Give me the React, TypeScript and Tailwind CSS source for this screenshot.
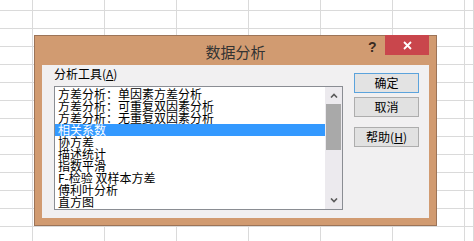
import React from "react";

const items = [
  "方差分析：单因素方差分析",
  "方差分析：可重复双因素分析",
  "方差分析：无重复双因素分析",
  "相关系数",
  "协方差",
  "描述统计",
  "指数平滑",
  "F-检验 双样本方差",
  "傅利叶分析",
  "直方图",
];

const font = { fontFamily: '"Noto Sans CJK SC", "Noto Sans", sans-serif' };

export default function App() {
  const cells = Array.from({ length: 14 * 8 });
  return (
    <div className="relative w-[474px] h-[241px] overflow-hidden bg-white" style={font}>
      <div className="grid grid-cols-[33px_repeat(6,72px)_1fr] grid-rows-[11px_repeat(13,18px)]">
        {cells.map((_, i) => (
          <div key={i} className="border-r border-b border-[#dadada]" />
        ))}
      </div>

      <div className="absolute left-[34px] top-[35px] w-[403px] h-[191px] bg-[#d19b71] border border-[#9c7458] flex flex-col">
        <div className="relative h-[29px] flex items-center justify-center">
          <span className="text-[15px] leading-[15px] text-[#333333] mt-[1px]">数据分析</span>
          <span className="absolute left-[333px] top-[4px] text-[14px] font-bold leading-[14px] text-[#3a2b22]" style={{ fontFamily: '"Liberation Sans", sans-serif' }}>?</span>
          <div className="absolute right-[7px] top-[-1px] w-[44px] h-[20px] bg-[#c9464c] flex items-center justify-center">
            <svg width="9" height="9" viewBox="0 0 9 9">
              <path d="M1 1 L8 8 M8 1 L1 8" stroke="#ffffff" strokeWidth="1.8" />
            </svg>
          </div>
        </div>

        <div className="mx-[7px] h-[153px] bg-[#f1f0f1] flex">
          <div className="pl-[12px] pt-[3px] flex flex-col">
            <div className="text-[12px] leading-[12px] text-black">
              分析工具(<span className="underline underline-offset-1">A</span>)
            </div>
            <div className="mt-[6px] w-[289px] h-[124px] border border-[#8a8d93] bg-white flex">
              <div className="flex-1 pt-[1px] flex flex-col">
                {items.map((t, i) => (
                  <div
                    key={t}
                    className={
                      i === 3
                        ? "h-[12px] pl-[3px] text-[12px] leading-[12px] bg-[#3399ff] text-white whitespace-nowrap"
                        : "h-[12px] pl-[3px] text-[12px] leading-[12px] text-black whitespace-nowrap"
                    }
                  >
                    {t}
                  </div>
                ))}
              </div>
              <div className="w-[17px] bg-[#eceaee] flex flex-col">
                <div className="h-[17px] flex items-center justify-center">
                  <svg width="8" height="5" viewBox="0 0 8 5">
                    <path d="M1 4.5 L4 1.5 L7 4.5" stroke="#5a5a5a" strokeWidth="1.6" fill="none" />
                  </svg>
                </div>
                <div className="mx-[1px] h-[46px] bg-[#a9a9a9]" />
                <div className="flex-1" />
                <div className="h-[17px] flex items-center justify-center">
                  <svg width="8" height="5" viewBox="0 0 8 5">
                    <path d="M1 0.5 L4 3.5 L7 0.5" stroke="#5a5a5a" strokeWidth="1.6" fill="none" />
                  </svg>
                </div>
              </div>
            </div>
          </div>

          <div className="ml-[11px] pt-[8px] flex flex-col">
            <div className="w-[65px] h-[20px] border border-[#5ba3dc] bg-[#e3e3e3] flex items-center justify-center text-[12px] leading-[12px] text-black">
              确定
            </div>
            <div className="mt-[4px] w-[65px] h-[20px] border border-[#adadad] bg-[#e1e1e1] flex items-center justify-center text-[12px] leading-[12px] text-black">
              取消
            </div>
            <div className="mt-[10px] w-[65px] h-[20px] border border-[#adadad] bg-[#e1e1e1] flex items-center justify-center text-[12px] leading-[12px] text-black">
              帮助(<span className="underline underline-offset-1">H</span>)
            </div>
          </div>
        </div>
      </div>
    </div>
  );
}
